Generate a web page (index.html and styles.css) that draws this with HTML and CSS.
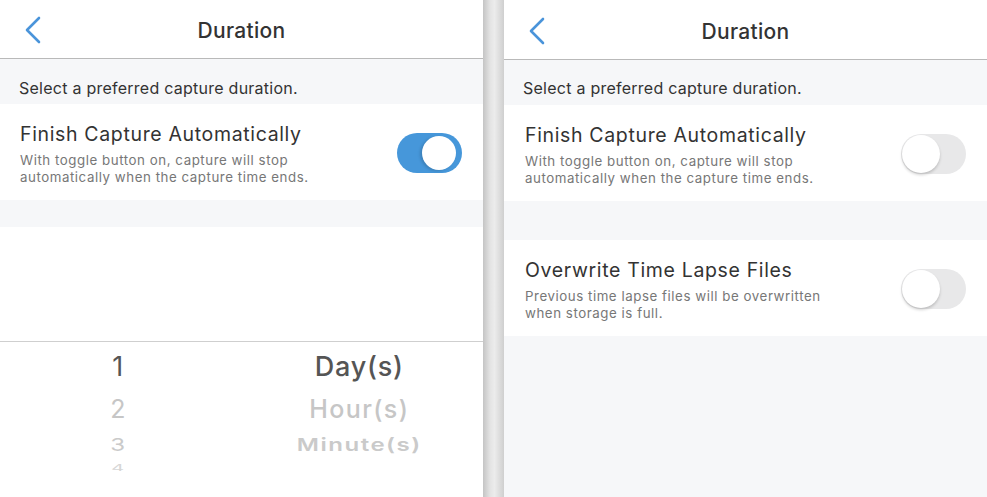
FILE: index.html
```html
<!DOCTYPE html>
<html lang="en">
<head>
    <meta charset="UTF-8">
    <meta name="viewport" content="width=device-width, initial-scale=1.0">
    <title>Duration</title>
    <link rel="stylesheet" href="styles.css">
</head>
<body>
    <!-- Left screen: toggle on, picker shown -->
    <div class="screen">
        <div class="nav">
            <svg class="back" width="18" height="28" viewBox="0 0 18 28"><path d="M15 2 L3 14 L15 26" fill="none" stroke="#4a94da" stroke-width="2.6" stroke-linecap="round" stroke-linejoin="round"/></svg>
            <div class="nav-title">Duration</div>
        </div>
        <div class="hint">Select a preferred capture duration.</div>
        <div class="row">
            <div class="row-text">
                <div class="row-title">Finish Capture Automatically</div>
                <div class="row-desc">With toggle button on, capture will stop<br>automatically when the capture time ends.</div>
            </div>
            <div class="toggle on"><div class="knob"></div></div>
        </div>
        <div class="gap-small"></div>
        <div class="blank"></div>
        <div class="picker">
            <div class="pick-row sel"><span class="num">1</span><span class="unit">Day(s)</span></div>
            <div class="pick-row second"><span class="num">2</span><span class="unit">Hour(s)</span></div>
            <div class="pick-row third"><span class="num">3</span><span class="unit">Minute(s)</span></div>
            <div class="pick-row fourth"><span class="num">4</span><span class="unit"></span></div>
        </div>
    </div>

    <div class="divider"></div>

    <!-- Right screen: toggle off -->
    <div class="screen grey">
        <div class="nav tall">
            <svg class="back" width="18" height="28" viewBox="0 0 18 28"><path d="M15 2 L3 14 L15 26" fill="none" stroke="#4a94da" stroke-width="2.6" stroke-linecap="round" stroke-linejoin="round"/></svg>
            <div class="nav-title">Duration</div>
        </div>
        <div class="hint">Select a preferred capture duration.</div>
        <div class="row">
            <div class="row-text">
                <div class="row-title">Finish Capture Automatically</div>
                <div class="row-desc">With toggle button on, capture will stop<br>automatically when the capture time ends.</div>
            </div>
            <div class="toggle"><div class="knob"></div></div>
        </div>
        <div class="gap-big"></div>
        <div class="row">
            <div class="row-text">
                <div class="row-title">Overwrite Time Lapse Files</div>
                <div class="row-desc">Previous time lapse files will be overwritten<br>when storage is full.</div>
            </div>
            <div class="toggle"><div class="knob"></div></div>
        </div>
    </div>
</body>
</html>
```

FILE: styles.css
```css
body {
    margin: 0;
    display: flex;
    height: 497px;
    overflow: hidden;
    font-family: Inter, "Liberation Sans", sans-serif;
    color: #333;
    background: #fff;
}

.screen {
    width: 483px;
    display: flex;
    flex-direction: column;
    background: #fff;
}

.screen.grey {
    background: #f6f7f9;
}

.divider {
    width: 21px;
    background: linear-gradient(to right, #c4c4c4, #e4e4e4 35%, #ececec 55%, #cfcfcf);
}

.nav {
    height: 58px;
    border-bottom: 1px solid #b9b9b9;
    display: flex;
    align-items: center;
    justify-content: center;
    position: relative;
    background: #fff;
}

.nav.tall {
    height: 59px;
}

.back {
    position: absolute;
    left: 24px;
    top: 16px;
}

.nav.tall .back {
    top: 17px;
}

.nav-title {
    font-size: 21px;
    font-weight: 500;
    color: #333;
    margin-top: 3px;
    letter-spacing: 0.3px;
}

.hint {
    height: 45px;
    background: #f6f7f9;
    font-size: 16px;
    letter-spacing: 0.25px;
    color: #333;
    padding-left: 19px;
    box-sizing: border-box;
    padding-top: 19px;
}

.nav.tall + .hint {
    padding-top: 18px;
}

.row {
    height: 96px;
    background: #fff;
    display: flex;
    align-items: center;
    justify-content: space-between;
    padding: 0 20px 0 20px;
    box-sizing: border-box;
}

.screen.grey .row {
    padding-left: 21px;
}

.row-text {
    margin-top: 3px;
}

.row-title {
    font-size: 19.5px;
    letter-spacing: 0.65px;
    color: #333;
    margin-bottom: 6px;
}

.row-desc {
    font-size: 13.3px;
    line-height: 17px;
    color: #777;
    letter-spacing: 0.55px;
}

.toggle {
    width: 65px;
    height: 40px;
    border-radius: 20px;
    background: #e8e8e9;
    position: relative;
    margin-right: 1px;
    margin-top: 1px;
}

.toggle .knob {
    position: absolute;
    top: 1px;
    left: 1px;
    width: 38px;
    height: 38px;
    border-radius: 50%;
    background: #fff;
    box-shadow: 0 2px 3px rgba(0, 0, 0, 0.18);
}

.toggle.on {
    background: #4697da;
}

.toggle.on .knob {
    left: 25px;
    top: 3px;
    width: 34px;
    height: 34px;
    box-shadow: -2px 1px 3px rgba(0, 0, 0, 0.15);
}

.gap-small {
    height: 27px;
    background: #f6f7f9;
}

.gap-big {
    height: 39px;
}

.blank {
    height: 114px;
    border-bottom: 1px solid #cfcfcf;
    background: #fff;
}

.picker {
    flex: 1;
    background: #fff;
    padding-top: 3px;
}

.pick-row {
    display: flex;
    align-items: center;
}

.num {
    width: 236px;
    text-align: center;
}

.unit {
    width: 248px;
    text-align: center;
}

.pick-row.sel {
    height: 42px;
    font-size: 27px;
    color: #555;
}

.pick-row.sel .unit {
    font-weight: 500;
    letter-spacing: 0.8px;
}

.pick-row.second {
    height: 43px;
    font-size: 25px;
    color: #c6c6c6;
    font-weight: 500;
}

.pick-row.second .unit {
    letter-spacing: 1.4px;
}

.pick-row.second .num {
    font-weight: 400;
}

.pick-row.third {
    height: 28px;
    font-size: 24px;
    color: #cacaca;
    font-weight: 600;
    transform: scaleY(0.74);
}

.pick-row.third .unit {
    letter-spacing: 1.5px;
}

.pick-row.third .num {
    font-weight: 400;
}

.pick-row.fourth {
    height: 20px;
    font-size: 20px;
    color: #d6d6d6;
    transform: scaleY(0.45);
}
```
